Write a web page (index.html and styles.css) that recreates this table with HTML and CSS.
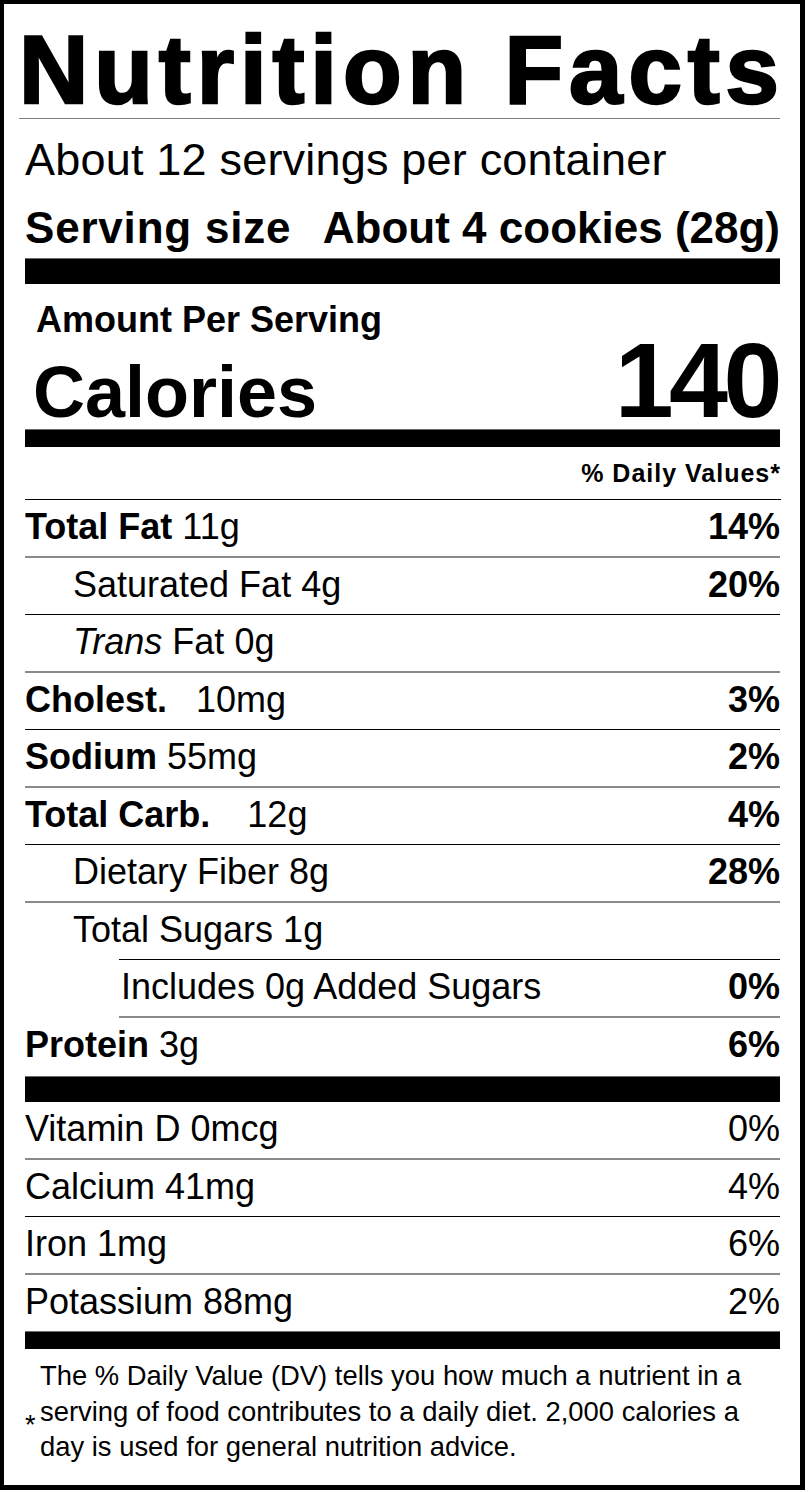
FILE: index.html
```html
<!DOCTYPE html>
<html lang="en">
<head>
<meta charset="utf-8">
<title>Nutrition Facts</title>
<link rel="stylesheet" href="styles.css">
</head>
<body>
<section class="label">
  <h1 class="title">Nutrition Facts</h1>
  <div class="servings">About 12 servings per container</div>
  <div class="serving-size"><span class="ss-label">Serving size</span><span>About 4 cookies (28g)</span></div>
  <div class="bar bar-lg"></div>
  <div class="amount">Amount Per Serving</div>
  <div class="calories"><span class="cal-label">Calories</span><span class="cal-value">140</span></div>
  <div class="bar bar-md"></div>
  <div class="dv-head">% Daily Values*</div>

  <div class="row line-soft"><span><b>Total Fat</b> 11g</span><b>14%</b></div>
  <div class="row line-hard sub"><span>Saturated Fat 4g</span><b>20%</b></div>
  <div class="row line-soft sub"><span><i>Trans</i> Fat 0g</span></div>
  <div class="row line-hard"><span><b>Cholest.</b><span class="gap-a">10mg</span></span><b>3%</b></div>
  <div class="row line-soft"><span><b>Sodium</b> 55mg</span><b>2%</b></div>
  <div class="row line-hard"><span><b>Total Carb.</b><span class="gap-b">12g</span></span><b>4%</b></div>
  <div class="row line-soft sub"><span>Dietary Fiber 8g</span><b>28%</b></div>
  <div class="row sub sugars"><span>Total Sugars 1g</span></div>
  <div class="row line-soft added"><span>Includes 0g Added Sugars</span><b>0%</b></div>
  <div class="row protein"><span><b>Protein</b> 3g</span><b>6%</b></div>
  <div class="bar bar-lg"></div>

  <div class="row line-soft"><span>Vitamin D 0mcg</span><span>0%</span></div>
  <div class="row line-hard"><span>Calcium 41mg</span><span>4%</span></div>
  <div class="row line-soft"><span>Iron 1mg</span><span>6%</span></div>
  <div class="row last"><span>Potassium 88mg</span><span>2%</span></div>
  <div class="bar bar-md"></div>

  <div class="footnote">
    <span class="star">*</span>
    <p class="foot-text">The % Daily Value (DV) tells you how much a nutrient in a<br>serving of food contributes to a daily diet. 2,000 calories a<br>day is used for general nutrition advice.</p>
  </div>
</section>
</body>
</html>
```

FILE: styles.css
```css
* {
  box-sizing: border-box;
}

html, body {
  margin: 0;
  padding: 0;
  background: #fff;
}

body {
  font-family: "Liberation Sans", Arial, sans-serif;
  color: #000;
}

.label {
  width: 805px;
  border-style: solid;
  border-color: #000;
  border-width: 4px 5px 5px 4px;
  padding: 0 20px 0 21px;
}

.title {
  margin: 0 0 0 -6px;
  padding-top: 18px;
  font-size: 96px;
  line-height: 96px;
  font-weight: 700;
  letter-spacing: 5.9px;
  -webkit-text-stroke: 2.5px #000;
  white-space: nowrap;
  border-bottom: 1px solid #808080;
}

.servings {
  padding-top: 10px;
  font-size: 45px;
  line-height: 62px;
  letter-spacing: 0.2px;
  white-space: nowrap;
}

.serving-size {
  display: flex;
  justify-content: space-between;
  padding-top: 6px;
  font-size: 44px;
  line-height: 61px;
  font-weight: 700;
  white-space: nowrap;
}

.ss-label {
  letter-spacing: 0.8px;
}

.bar {
  background: #000;
  border-top: 1px solid #6a6a6a;
}

.bar-lg {
  height: 26px;
}

.bar-md {
  height: 18px;
}

.amount {
  padding: 6px 0 0 11px;
  font-size: 36px;
  line-height: 60px;
  font-weight: 700;
}

.calories {
  display: flex;
  justify-content: space-between;
  align-items: flex-start;
  height: 79px;
  padding-left: 8px;
  font-weight: 700;
}

.cal-label {
  font-size: 72px;
  line-height: 84px;
}

.cal-value {
  font-size: 106px;
  line-height: 61px;
  letter-spacing: -4.5px;
  margin-right: 2px;
}

.dv-head {
  text-align: right;
  font-size: 25px;
  line-height: 52px;
  font-weight: 700;
  letter-spacing: 1px;
  border-bottom: 1px solid #000;
  margin-right: -1px;
}

.row {
  display: flex;
  justify-content: space-between;
  font-size: 36px;
  line-height: 54px;
  height: 56px;
  white-space: nowrap;
}

.row b {
  font-weight: 700;
}

.line-hard {
  height: 57px;
  border-bottom: 1px solid #000;
}

.line-soft {
  height: 58px;
  border-bottom: 2px solid #8a8a8a;
}

.sub {
  padding-left: 48px;
}

.sugars {
  height: 56px;
}

.added {
  margin-left: 94px;
  padding-left: 2px;
  border-top: 1px solid #000;
  height: 59px;
}

.protein {
  height: 58px;
}

.last {
  height: 56px;
}

.gap-a {
  margin-left: 29px;
}

.gap-b {
  margin-left: 37px;
}

.footnote {
  display: flex;
  padding: 9px 0 20px 0;
}

.star {
  width: 15px;
  flex: none;
  padding-top: 50px;
  font-size: 27px;
  line-height: 35.7px;
}

.foot-text {
  margin: 0;
  font-size: 27.4px;
  line-height: 35.7px;
  white-space: nowrap;
}
```
